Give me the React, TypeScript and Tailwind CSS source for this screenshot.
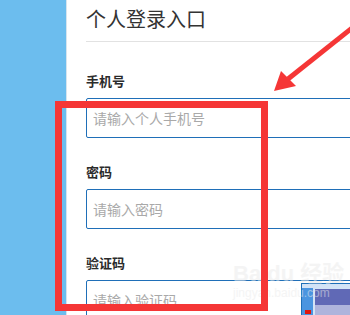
import React from 'react';

const fieldClasses = "w-[320px] h-[40px] border border-[#1f6fb8] rounded-[2px] pl-[6px] text-[14px] text-[#333] placeholder:text-[#a9a9a9] outline-none bg-white";
const labelClasses = "text-[13px] leading-[20px] font-bold text-[#2b2b2b] mb-[7px]";

const Field: React.FC<{ label: string; placeholder: string; type?: string }> = ({ label, placeholder, type = 'text' }) => (
    <div className="flex flex-col">
        <label className={labelClasses}>{label}</label>
        <input type={type} placeholder={placeholder} className={fieldClasses} />
    </div>
);

export default function App() {
    return (
        <div
            className="relative w-[350px] h-[315px] overflow-hidden bg-white flex"
            style={{ fontFamily: '"Noto Sans CJK SC", "Noto Sans", sans-serif' }}
        >
            <div className="w-[67px] shrink-0 bg-[#6cbdee] border-r border-[#d6e4ee]"></div>
            <div className="flex-1 pl-[19px]">
                <div className="pt-[5px] pb-[8px] border-b border-[#e2e2e2]">
                    <h1 className="text-[20px] leading-[28px] font-normal text-[#333]">个人登录入口</h1>
                </div>
                <div className="pt-[29px] flex flex-col gap-[24px]">
                    <Field label="手机号" placeholder="请输入个人手机号" />
                    <Field label="密码" placeholder="请输入密码" type="password" />
                    <Field label="验证码" placeholder="请输入验证码" />
                </div>
            </div>

            {/* screenshot thumbnail in the corner */}
            <div className="absolute left-[301px] top-[283px] w-[49px] h-[32px] border-l border-t border-[#1f6fb8] bg-[#d3e3f6] pt-[4px] flex gap-[2px]">
                <div className="w-[11px] bg-[#4b95e0] flex flex-col justify-end items-center pb-[1px]">
                    <div className="w-[6px] h-[4px] bg-[#e0160f]"></div>
                </div>
                <div className="flex-1 flex flex-col pt-[1px]">
                    <div className="h-[16px] bg-[#6069b6]"></div>
                    <div className="flex-1 bg-[#aeb4dc]"></div>
                </div>
            </div>

            {/* baidu watermark */}
            <div className="absolute left-[233px] top-[262px] text-[#ebebeb] opacity-50 pointer-events-none select-none">
                <div className="text-[22px] leading-[24px] font-bold" style={{ fontFamily: '"Liberation Sans", "Noto Sans CJK SC", sans-serif' }}>Baidu 经验</div>
                <div className="text-[12px] leading-[14px]" style={{ fontFamily: '"Liberation Sans", sans-serif' }}>jingyan.baidu.com</div>
            </div>

            {/* red annotation box */}
            <div className="absolute left-[55px] top-[101px] w-[213px] h-[210px] border-[7px] border-[#f53636] pointer-events-none"></div>

            {/* red annotation arrow */}
            <svg className="absolute left-0 top-0 pointer-events-none" width="350" height="315" viewBox="0 0 350 315">
                <line x1="352" y1="28" x2="288" y2="79" stroke="#f53636" strokeWidth="5" />
                <polygon points="274,91 281,71 296,86" fill="#f53636" />
            </svg>
        </div>
    );
}
